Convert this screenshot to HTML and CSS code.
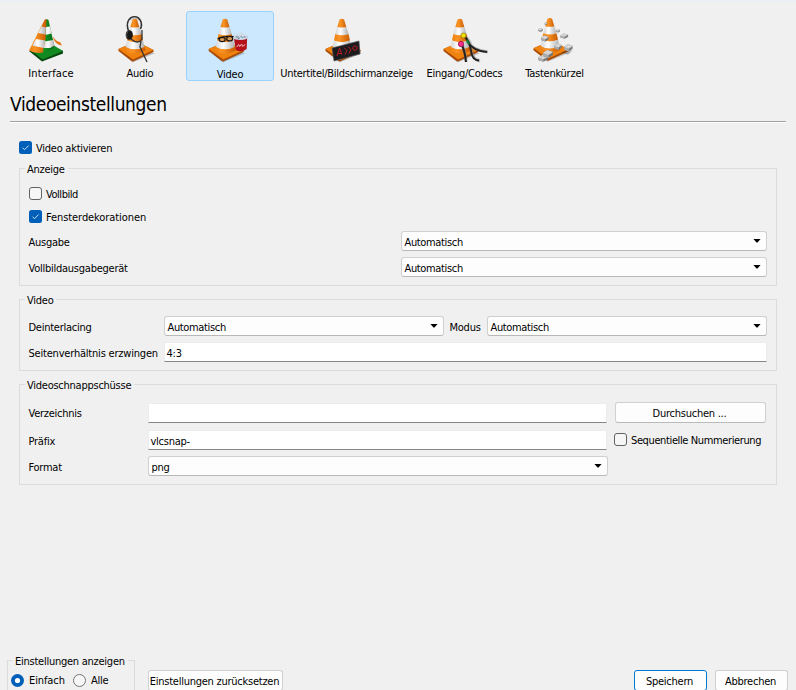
FILE: index.html
```html
<!DOCTYPE html>
<html lang="de">
<head>
<meta charset="utf-8">
<title>Einstellungen</title>
<link rel="stylesheet" href="styles.css">
</head>
<body>
<svg class="defs" width="0" height="0" aria-hidden="true">
  <defs>
    <linearGradient id="or" x1="0" x2="1"><stop offset="0" stop-color="#ec8010"/><stop offset=".35" stop-color="#fa9426"/><stop offset="1" stop-color="#c95a00"/></linearGradient>
    <linearGradient id="wh" x1="0" x2="1"><stop offset="0" stop-color="#d4d4d4"/><stop offset=".4" stop-color="#fff"/><stop offset="1" stop-color="#b0b0b0"/></linearGradient>
    <linearGradient id="gr" x1="0" x2="1"><stop offset="0" stop-color="#159a25"/><stop offset="1" stop-color="#076b15"/></linearGradient>
    <g id="cone">
      <path d="M3 38 15 48.500 38 39z" fill="#0003"/>
      <path d="M1 35 10 31 26 31 36 36 36 38 15.500 47.500 14 47 1 37z" fill="#a84a04"/>
      <path d="M1 35 10 31 26 31 36 36 15.500 45.500z" fill="#f0820f"/>
      <path d="M15 5.500Q17.300 4 19.600 5.500L21.900 13.500H12.700z" fill="url(#or)"/>
      <path d="M12.700 13Q17.300 15 21.900 13L24 20Q17.300 22.500 10.800 20z" fill="url(#wh)"/>
      <path d="M10.800 20Q17.300 22.500 24 20L25.500 26.500Q17.300 30 9.500 26.500z" fill="url(#or)"/>
      <path d="M9.500 26.500Q17.300 30 25.500 26.500L27 33Q17.300 38 8 33z" fill="url(#wh)"/>
      <path d="M8 33Q17.300 38 27 33L27.800 36.500Q17 42.500 7.200 36.500z" fill="url(#or)"/>
    </g>
    <g id="brick">
      <path d="M0 3 4 0 9 2 9 5 5 8 0 6z" fill="#777"/>
      <path d="M0 3 5 5V8L0 6z" fill="#adadad"/>
      <path d="M0 3 4 0 9 2 5 5z" fill="#dedede"/>
      <path d="M3 2.500 4.500 1.500 6.500 2.200 5 3.500z" fill="#f8f8f8" stroke="#999" stroke-width=".4"/>
    </g>
  </defs>
</svg>
<nav class="tabs">
  <div class="tab">
    <svg class="icon" viewBox="0 0 48 48">
      <path d="M3 37 16 47.500 37 39.500 37 37 26 32 12 32z" fill="#06480e"/>
      <path d="M5 36 20 31 27 31 37 37 16.500 45.500z" fill="#128a22"/>
      <path d="M19.500 5.500Q21.500 4.800 22.500 6L28.500 33Q25 38 16.700 38z" fill="url(#gr)"/>
      <path d="M19.500 13 24 12.500 25.800 19.500 19 21zM18.500 27.500 27.200 26 28.500 31.500 24 34 17.500 34z" fill="url(#wh)"/>
      <path d="M18.500 6Q19.500 5 20.500 5.500L19.500 25 16.700 38.500Q9 40 3 36.500z" fill="url(#or)"/>
      <path d="M15.500 12.500 20 13.500 19.500 20.500 12.300 19zM10 25 19.200 26.500 17.700 34 6.300 31.500z" fill="url(#wh)"/>
      <path d="M27 19Q31 25 34 28L35.500 31.500Q31 30 27.500 26z" fill="#eee"/>
      <path d="M26.500 22.500Q31 28 34 28L36 31.500Q29 31 26.500 22.500z" fill="#e57717"/>
    </svg>
    <span class="t t-interface">Interface</span>
  </div>
  <div class="tab">
    <svg class="icon" viewBox="0 0 48 48">
      <use href="#cone" x="1.500"/>
      <path d="M13 18C9 9 13 2.700 18.500 2.700S27 9 24.500 15" fill="none" stroke="#333" stroke-width="1.600"/>
      <path d="M14 6Q18.500 1.500 23 6" fill="none" stroke="#888" stroke-width=".8"/>
      <ellipse cx="13.300" cy="21" rx="3.600" ry="4.800" fill="#181818"/>
      <path d="M12 17Q9.500 20 11 24" fill="none" stroke="#555"/>
      <path d="M15 25Q22 31 26 25V16M25 27 24 33 31 48" fill="none" stroke="#333" stroke-width="1.300"/>
    </svg>
    <span class="t t-audio">Audio</span>
  </div>
  <div class="tab selected">
    <svg class="icon" viewBox="0 0 48 48">
      <g transform="translate(1.700)">
        <use href="#cone"/>
        <path d="M26 23Q33 20 39.500 22L39 35Q34 39 28 36z" fill="#b3101b"/>
        <path d="M26 25Q25 19 30 20.500 33 17 36 20 41 20 39 25 33 27 26 25" fill="#ccdbe8"/>
        <path d="M28 23h3m2-1 2 2m1-1 2 0M30 25l2-1" stroke="#63788e" fill="none"/>
        <path d="M29 33 31 30.500l1 2 2-2.500 1 2.500 2.500-2" stroke="#f3b8bc" fill="none"/>
        <path d="M10 25Q13 22 26 22.500" stroke="#1b1713" fill="none" stroke-width="1.200"/>
        <ellipse cx="14.500" cy="25.500" rx="3" ry="2.200" fill="#d99a58" stroke="#1b1713" stroke-width="1.200"/>
        <ellipse cx="22" cy="24.700" rx="3" ry="2.200" fill="#d99a58" stroke="#1b1713" stroke-width="1.200"/>
      </g>
    </svg>
    <span class="t t-video">Video</span>
  </div>
  <div class="tab">
    <svg class="icon" viewBox="0 0 48 48">
      <use href="#cone" x=".5"/>
      <path d="M8 34 35 27 36 40 10 47z" fill="#1b1b1d" stroke="#55575a" stroke-width=".7"/>
      <path d="M13 42 15.500 34 18 41M14 39.500h3M20 33.500l3 3-2 4M24 32.500l3 3-2 4" fill="none" stroke="#bb1c27"/>
      <circle cx="31" cy="34" r="2.200" fill="none" stroke="#bb1c27"/>
    </svg>
    <span class="t t-osd">Untertitel/Bildschirmanzeige</span>
  </div>
  <div class="tab">
    <svg class="icon" viewBox="0 0 48 48">
      <use href="#cone" x="1.500"/>
      <path d="M21 31Q25 38 25 48M25 23Q31 29 31 37T39 47M26 27Q31 36 47 38" fill="none" stroke="#8888" stroke-width="3"/>
      <path d="M21 31Q24 38 25 48M24 23Q29 28 30 37T38 46.500M26 27Q32 37 46 38" fill="none" stroke="#222" stroke-width="2"/>
      <circle cx="22.500" cy="21.500" r="2.500" fill="#eee000" stroke="#8e7a00" stroke-width=".7"/>
      <circle cx="20" cy="30" r="2.700" fill="#ee3285" stroke="#a20047" stroke-width=".7"/>
      <path d="M26 26l2 4" stroke="#128332" stroke-width="2"/>
    </svg>
    <span class="t t-codecs">Eingang/Codecs</span>
  </div>
  <div class="tab">
    <svg class="icon shifted" viewBox="0 0 48 48">
      <use href="#cone" x="1.500" y="-.7"/>
      <path d="M30 38 42 36 37 41z" fill="#0003"/>
      <use href="#brick" transform="translate(13.500 8.500) scale(.3)"/>
      <use href="#brick" transform="translate(7.300 14) scale(.5)"/>
      <use href="#brick" transform="translate(25 15) scale(.45)"/>
      <use href="#brick" transform="translate(29.500 19.500) scale(.85 .65)"/>
      <use href="#brick" transform="translate(10 21.500) scale(.85 .75)"/>
      <use href="#brick" transform="translate(23.500 29.500) scale(.8)"/>
      <use href="#brick" transform="translate(33 30) scale(.95)"/>
      <use href="#brick" transform="translate(7 41) scale(1.100 .85)"/>
      <use href="#brick" transform="translate(12 36) scale(1.100 1)"/>
    </svg>
    <span class="t t-keys">Tastenkürzel</span>
  </div>
</nav>
<h1><span class="t t-title">Videoeinstellungen</span></h1>
<main>
  <div class="check first"><svg class="box" viewBox="0 0 13 13"><rect width="13" height="13" rx="2.500" fill="#005fb8"/><path d="M3.500 6.700 5.500 8.700 9.700 4.500" fill="none" stroke="#cfe4f6"/></svg><span class="t t-enable">Video aktivieren</span></div>

  <section class="group display">
    <h2><span class="t t-anzeige">Anzeige</span></h2>
    <div class="check"><svg class="box" viewBox="0 0 13 13"><rect x=".5" y=".5" width="12" height="12" rx="2.500" fill="#f6f6f6" stroke="#626262"/></svg><span class="t t-voll">Vollbild</span></div>
    <div class="check"><svg class="box" viewBox="0 0 13 13"><rect width="13" height="13" rx="2.500" fill="#005fb8"/><path d="M3.500 6.700 5.500 8.700 9.700 4.500" fill="none" stroke="#cfe4f6"/></svg><span class="t t-deko">Fensterdekorationen</span></div>
    <div class="row"><label class="t t-ausgabe">Ausgabe</label><div class="combo"><span class="t t-auto">Automatisch</span></div></div>
    <div class="row"><label class="t t-geraet">Vollbildausgabegerät</label><div class="combo"><span class="t t-auto">Automatisch</span></div></div>
  </section>

  <section class="group video">
    <h2><span class="t t-video">Video</span></h2>
    <div class="row"><label class="t t-deint">Deinterlacing</label><div class="combo"><span class="t t-auto">Automatisch</span></div><label class="modus t t-modus">Modus</label><div class="combo"><span class="t t-auto">Automatisch</span></div></div>
    <div class="row"><label class="t t-ratio">Seitenverhältnis erzwingen</label><div class="field"><span class="t">4:3</span></div></div>
  </section>

  <section class="group snaps">
    <h2><span class="t t-snaps">Videoschnappschüsse</span></h2>
    <div class="row directory"><label class="t t-verz">Verzeichnis</label><div class="field"></div><div class="button"><span class="t t-browse">Durchsuchen ...</span></div></div>
    <div class="row prefix"><label class="t t-prefix">Präfix</label><div class="field"><span class="t t-vlc">vlcsnap-</span></div><div class="check seq"><svg class="box" viewBox="0 0 13 13"><rect x=".5" y=".5" width="12" height="12" rx="2.500" fill="#f6f6f6" stroke="#626262"/></svg><span class="t t-seq">Sequentielle Nummerierung</span></div></div>
    <div class="row"><label class="t t-format">Format</label><div class="combo"><span class="t t-png">png</span></div></div>
  </section>
</main>
<footer>
  <section class="group mode">
    <h2><span class="t t-show">Einstellungen anzeigen</span></h2>
    <div class="radios">
      <svg class="box" viewBox="0 0 13 13"><circle cx="6.500" cy="6.500" r="6.500" fill="#005fb8"/><circle cx="6.500" cy="6.500" r="2.600" fill="#fff"/></svg><span class="t t-einfach">Einfach</span>
      <svg class="box" viewBox="0 0 13 13"><circle cx="6.500" cy="6.500" r="6" fill="#f6f6f6" stroke="#757575"/></svg><span class="t t-alle">Alle</span>
    </div>
  </section>
  <div class="button reset"><span class="t t-reset">Einstellungen zurücksetzen</span></div>
  <div class="button save"><span class="t t-save">Speichern</span></div>
  <div class="button cancel"><span class="t t-cancel">Abbrechen</span></div>
</footer>
</body>
</html>
```
FILE: styles.css
```css
* { box-sizing: border-box; }
body {
  margin: 0;
  width: 796px;
  height: 690px;
  overflow: hidden;
  background: #f0f0f0;
  border-top: 1px solid #e9eff8;
  color: #000;
  font: 11px/14px "DejaVu Sans Condensed", "DejaVu Sans", sans-serif;
  font-stretch: condensed;
}
.defs { display: block; height: 0; }
.t { white-space: nowrap; letter-spacing: -0.25px; }
.t-interface { letter-spacing: 0.15px; }
.t-osd { letter-spacing: -0.29px; }
.t-title { letter-spacing: -0.38px; }
.t-deko { letter-spacing: -0.08px; }
.t-voll { letter-spacing: -0.45px; }
.t-auto { letter-spacing: -0.35px; }
.t-seq { letter-spacing: -0.38px; }
.t-ratio { letter-spacing: -0.2px; }
.t-einfach { letter-spacing: -0.1px; }
.tabs {
  display: grid;
  grid-template-columns: 88px 88px 88px 143px 88px 88px;
  gap: 2px;
  padding: 10px 0 0 6px;
  height: 80px;
}
.tab {
  display: flex;
  flex-direction: column;
  align-items: center;
  height: 70px;
  padding-top: 3px;
}
.icon { width: 48px; height: 48px; flex: none; overflow: visible; }
.tab .t { margin-top: 5px; }
.tab .t-osd { margin-right: 2px; }
.tab .t-codecs, .tab .t-keys { margin-right: 1px; }
.tab .t-interface { margin-left: 2px; }
.tab.selected {
  border: 1px solid #99d1ff;
  border-radius: 3px;
  background: #cce8ff;
  padding-top: 2px;
}
.tab.selected .t { margin-top: 6px; }
h1 {
  margin: 0 10px;
  height: 41px;
  padding-top: 11px;
  border-bottom: 1px solid #a0a0a0;
  box-shadow: 0 1px #fff;
  font-size: 19px;
  line-height: 24px;
  font-weight: normal;
}
main { padding: 19px 19px 0; }
.check { display: flex; align-items: center; gap: 4px; height: 13px; }
.check .t { line-height: 15px; padding-top: 1px; }
.box { width: 13px; height: 13px; flex: none; }
.group {
  border: 1px solid #dcdcdc;
  padding: 0 9px;
}
h2 {
  display: table;
  margin: -7px 0 0 -4px;
  padding: 0 3px 0 2px;
  height: 14px;
  background: #f0f0f0;
  font-size: 11px;
  line-height: 15px;
  font-weight: normal;
}
.row { display: flex; align-items: center; height: 20px; margin-top: 6px; }
.row > label { flex: none; padding-top: 4px; text-indent: -0.5px; }
.combo, .field {
  flex: 1;
  height: 20px;
  display: flex;
  align-items: center;
  padding: 3px 2.5px 0;
}
.combo {
  justify-content: space-between;
  padding-right: 5px;
  background: #fdfdfd;
  border: 1px solid #d0d0d0;
  border-bottom-color: #b8b8b8;
  border-radius: 3px;
}
.combo .t, .field .t { line-height: 15px; }
.combo::after {
  content: "";
  width: 8px;
  height: 4px;
  margin-top: -4px;
  background: #000;
  clip-path: polygon(0 0, 100% 0, 56% 100%, 44% 100%);
}
.field {
  padding-left: 1.5px;
  background: #fff;
  border: 1px solid #ececec;
  border-bottom-color: #868686;
}
.button {
  display: flex;
  justify-content: center;
  align-items: center;
  height: 21px;
  padding-top: 2px;
  padding-right: 2px;
  background: #fdfdfd;
  border: 1px solid #d0d0d0;
  border-bottom-color: #bababa;
  border-radius: 3px;
}
.display { margin-top: 14px; height: 118px; }
.display h2 + .check { margin-top: 10px; }
.display .check + .check { margin-top: 10px; }
.display .check + .row { margin-top: 8px; }
.display .row > label { width: 372px; }
.video { margin-top: 13px; height: 72px; }
.video h2 + .row { margin-top: 8px; }
.video .row > label:first-child { width: 135px; }
.video .row > .modus { width: 43px; padding-left: 6px; }
.snaps { margin-top: 13px; height: 101px; }
.snaps h2 + .row { margin-top: 9px; }
.snaps .row { display: grid; grid-template-columns: 119px 460px 7px 151px; }
.snaps .row .field { width: 459px; }
.snaps .row .button { grid-column: 4; }
.snaps .directory > label { padding-top: 2px; }
.snaps .row.prefix { margin-top: 8px; }
.snaps .row.prefix + .row { margin-top: 6px; }
.seq { grid-column: 4; margin: -1px 0 0 -1px; }
footer { display: flex; align-items: flex-start; margin-top: 175px; padding-left: 7px; }
.mode { width: 128px; height: 40px; padding: 0 3px; }
.mode h2 { margin-left: 2px; }
.radios { display: flex; align-items: center; gap: 5px; margin-top: 4px; }
.radios .t { line-height: 14px; margin-top: 1px; }
.radios .box { margin-top: -1px; }
.radios .t-einfach { width: 39px; }
footer .button { margin-top: 10px; flex: none; }
.reset { width: 135px; margin-left: 13px; }
.save { width: 73px; margin-left: 351px; border-color: #0078d4; }
.cancel { width: 73px; margin-left: 8px; }
```
